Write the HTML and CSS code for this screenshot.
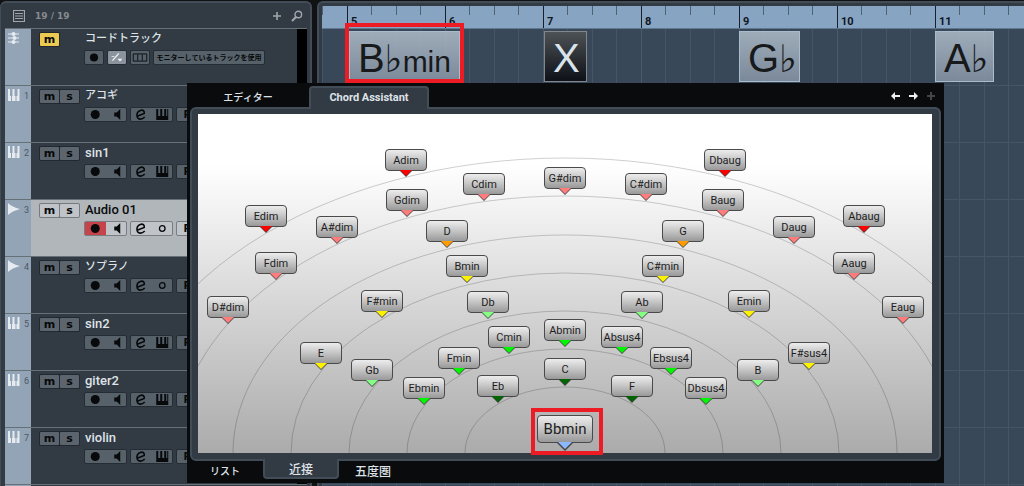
FILE: index.html
```html
<!DOCTYPE html>
<html lang="ja">
<head>
<meta charset="utf-8">
<title>Chord Assistant</title>
<link rel="stylesheet" href="styles.css">
</head>
<body>
<svg class="defs" aria-hidden="true">
  <symbol id="rec" viewBox="0 0 20 13"><circle cx="10" cy="6.5" r="4.500"/></symbol>
  <symbol id="spk" viewBox="0 0 20 13"><path d="M8 4.500h2.500l3.500-3.500v11l-3.500-3.500H8z"/></symbol>
  <symbol id="edit" viewBox="0 0 20 13"><path d="M6.500 8L13 5.500C13.500 2.500 11 1.500 9 2.500C6.500 3.500 5.500 6 5.800 8C6.200 12 10.500 12 13.500 9" fill="none" stroke="currentColor" stroke-width="1.600"/></symbol>
  <symbol id="keys" viewBox="0 0 20 13"><path d="M4 1h2v7h2V1h2v7h2V1h2v7h1V1h1v11H4z"/></symbol>
  <symbol id="ring" viewBox="0 0 20 13"><circle cx="10" cy="6.500" r="2.800" fill="none" stroke="currentColor" stroke-width="1.300"/></symbol>
  <symbol id="piano" viewBox="0 0 12 12"><path d="M0 0h2v7h1v5H0zM4 7h0.500V0h2v7h1v5H4zM9.500 0h2v12h-3V7h1z"/></symbol>
  <symbol id="wave" viewBox="0 0 12 12"><path d="M0 0q4 4 12 6q-8 2-12 6z"/></symbol>
  <symbol id="chord" viewBox="0 0 12 12"><path d="M0 2h11M0 6h11M0 10h11" stroke="currentColor" fill="none"/><circle cx="5.500" cy="2" r="2"/><circle cx="6.500" cy="6" r="2"/><circle cx="5.500" cy="10" r="2"/></symbol>
</svg>

<main class="app">
  <section class="panel tracks" aria-label="Tracks">
    <header class="tracks-head">
      <svg class="list-icon" viewBox="0 0 12 12"><path d="M.5.500h11v11H.5zM2 3.500h8M2 6h8M2 8.500h8" fill="none" stroke="currentColor" stroke-width="1.200"/></svg>
      <span class="count">19 / 19</span>
      <button class="plain" aria-label="Add track"><svg width="8" height="8" viewBox="0 0 8 8"><path d="M4 0v8M0 4h8" stroke="currentColor" stroke-width="1.600"/></svg></button>
      <button class="plain" aria-label="Search"><svg width="12" height="12" viewBox="0 0 12 12"><path d="M1 11l4-4" stroke="currentColor" stroke-width="2.200"/><circle cx="7.300" cy="4.500" r="3.300" fill="none" stroke="currentColor" stroke-width="1.400"/></svg></button>
    </header>

    <article class="track">
      <div class="strip"><svg><use href="#chord"/></svg></div>
      <div class="ms solo"><button class="muted">m</button></div>
      <div class="info"><h2 class="kana">コードトラック</h2>
        <div class="controls">
          <div class="group single"><button aria-label="Record"><svg viewBox="0 0 20 13"><use href="#rec"/></svg></button></div>
          <div class="group single lit"><button aria-label="Voicing"><svg viewBox="0 0 20 13"><path d="M5 10l7-8" stroke="currentColor" stroke-width="1.400"/><path d="M10.500 8h5.500l-2.700 3zM4 5h3v1H4z"/></svg></button></div>
          <div class="group single"><button aria-label="Lanes"><svg viewBox="0 0 20 13"><path d="M2.500 2.500h15v8h-15zM7.500 3v7M12.500 3v7" fill="none" stroke="currentColor"/></svg></button></div>
          <div class="group"><button class="monitor">モニターしているトラックを使用</button></div>
        </div></div>
      <div class="meter"></div>
    </article>

    <article class="track">
      <div class="strip"><svg><use href="#piano"/></svg><span>1</span></div>
      <div class="ms"><button>m</button><button>s</button></div>
      <div class="info"><h2 class="kana">アコギ</h2>
        <div class="controls"><div class="group pair"><button aria-label="Record"><svg><use href="#rec"/></svg></button><button aria-label="Monitor"><svg><use href="#spk"/></svg></button></div><div class="group pair"><button aria-label="Edit"><svg><use href="#edit"/></svg></button><button aria-label="Instrument"><svg><use href="#keys"/></svg></button></div><div class="group pair"><button>R</button><button>W</button></div></div></div>
      <div class="meter"></div>
    </article>

    <article class="track">
      <div class="strip"><svg><use href="#piano"/></svg><span>2</span></div>
      <div class="ms"><button>m</button><button>s</button></div>
      <div class="info"><h2>sin1</h2>
        <div class="controls"><div class="group pair"><button aria-label="Record"><svg><use href="#rec"/></svg></button><button aria-label="Monitor"><svg><use href="#spk"/></svg></button></div><div class="group pair"><button aria-label="Edit"><svg><use href="#edit"/></svg></button><button aria-label="Instrument"><svg><use href="#keys"/></svg></button></div><div class="group pair"><button>R</button><button>W</button></div></div></div>
      <div class="meter"></div>
    </article>

    <article class="track selected">
      <div class="strip"><svg><use href="#wave"/></svg><span>3</span></div>
      <div class="ms"><button>m</button><button>s</button></div>
      <div class="info"><h2>Audio 01</h2>
        <div class="controls"><div class="group pair"><button class="armed" aria-label="Record"><svg><use href="#rec"/></svg></button><button aria-label="Monitor"><svg><use href="#spk"/></svg></button></div><div class="group pair"><button aria-label="Edit"><svg><use href="#edit"/></svg></button><button aria-label="Channels"><svg><use href="#ring"/></svg></button></div><div class="group pair"><button>R</button><button>W</button></div></div></div>
      <div class="meter"></div>
    </article>

    <article class="track">
      <div class="strip"><svg><use href="#wave"/></svg><span>4</span></div>
      <div class="ms"><button>m</button><button>s</button></div>
      <div class="info"><h2 class="kana">ソプラノ</h2>
        <div class="controls"><div class="group pair"><button aria-label="Record"><svg><use href="#rec"/></svg></button><button aria-label="Monitor"><svg><use href="#spk"/></svg></button></div><div class="group pair"><button aria-label="Edit"><svg><use href="#edit"/></svg></button><button aria-label="Channels"><svg><use href="#ring"/></svg></button></div><div class="group pair"><button>R</button><button>W</button></div></div></div>
      <div class="meter"></div>
    </article>

    <article class="track">
      <div class="strip"><svg><use href="#piano"/></svg><span>5</span></div>
      <div class="ms"><button>m</button><button>s</button></div>
      <div class="info"><h2>sin2</h2>
        <div class="controls"><div class="group pair"><button aria-label="Record"><svg><use href="#rec"/></svg></button><button aria-label="Monitor"><svg><use href="#spk"/></svg></button></div><div class="group pair"><button aria-label="Edit"><svg><use href="#edit"/></svg></button><button aria-label="Instrument"><svg><use href="#keys"/></svg></button></div><div class="group pair"><button>R</button><button>W</button></div></div></div>
      <div class="meter"></div>
    </article>

    <article class="track">
      <div class="strip"><svg><use href="#piano"/></svg><span>6</span></div>
      <div class="ms"><button>m</button><button>s</button></div>
      <div class="info"><h2>giter2</h2>
        <div class="controls"><div class="group pair"><button aria-label="Record"><svg><use href="#rec"/></svg></button><button aria-label="Monitor"><svg><use href="#spk"/></svg></button></div><div class="group pair"><button aria-label="Edit"><svg><use href="#edit"/></svg></button><button aria-label="Instrument"><svg><use href="#keys"/></svg></button></div><div class="group pair"><button>R</button><button>W</button></div></div></div>
      <div class="meter"></div>
    </article>

    <article class="track">
      <div class="strip"><svg><use href="#piano"/></svg><span>7</span></div>
      <div class="ms"><button>m</button><button>s</button></div>
      <div class="info"><h2>violin</h2>
        <div class="controls"><div class="group pair"><button aria-label="Record"><svg><use href="#rec"/></svg></button><button aria-label="Monitor"><svg><use href="#spk"/></svg></button></div><div class="group pair"><button aria-label="Edit"><svg><use href="#edit"/></svg></button><button aria-label="Instrument"><svg><use href="#keys"/></svg></button></div><div class="group pair"><button>R</button><button>W</button></div></div></div>
      <div class="meter"></div>
    </article>
    <div class="track"><div class="strip"></div></div>
  </section>

  <section class="panel timeline" aria-label="Timeline">
    <div class="ruler">
      <span class="bar">5</span><span class="bar">6</span><span class="bar">7</span><span class="bar">8</span><span class="bar">9</span><span class="bar">10</span><span class="bar">11</span>
    </div>
    <div class="lane">
      <div class="event" style="left:27px;width:111px"><b>B</b><i>♭</i><em>min</em></div>
      <div class="event none" style="left:222px;width:43px"><b>X</b></div>
      <div class="event" style="left:417px;width:61px"><b>G</b><i>♭</i></div>
      <div class="event" style="left:613px;width:59px"><b>A</b><i>♭</i></div>
      <div class="mark mark-event"></div>
    </div>
    <div class="grid"></div>
  </section>
</main>

<section class="editor" aria-label="Chord editor">
  <nav class="tabs top">
    <button class="tab kana">エディター</button>
    <button class="tab active">Chord Assistant</button>
    <div class="nav">
      <button class="plain" aria-label="Back"><svg width="9" height="8" viewBox="0 0 9 8"><path d="M0 4l4-4v3h5v2H4v3z"/></svg></button>
      <button class="plain" aria-label="Forward"><svg width="9" height="8" viewBox="0 0 9 8"><path d="M9 4L5 0v3H0v2h5v3z"/></svg></button>
      <button class="plain off" aria-label="Add"><svg width="8" height="8" viewBox="0 0 8 8"><path d="M3 0h2v3h3v2H5v3H3V5H0V3h3z"/></svg></button>
    </div>
  </nav>
  <div class="frame">
    <div class="canvas">
      <svg class="rings" aria-hidden="true">
        <ellipse cx="50%" cy="100%" rx="100" ry="66"/>
        <ellipse cx="50%" cy="100%" rx="158" ry="104"/>
        <ellipse cx="50%" cy="100%" rx="216" ry="142"/>
        <ellipse cx="50%" cy="100%" rx="274" ry="180"/>
        <ellipse cx="50%" cy="100%" rx="332" ry="218"/>
        <ellipse cx="50%" cy="100%" rx="390" ry="257"/>
        <ellipse cx="50%" cy="100%" rx="448" ry="295"/>
      </svg>
      <button class="node red" style="--x:-159px;--y:46px">Adim</button>
      <button class="node red" style="--x:160px;--y:46px">Dbaug</button>
      <button class="node red" style="--x:-299px;--y:102px">Edim</button>
      <button class="node red" style="--x:299px;--y:102px">Abaug</button>
      <button class="node pink" style="--x:-81px;--y:70px">Cdim</button>
      <button class="node pink" style="--x:0px;--y:64px">G#dim</button>
      <button class="node pink" style="--x:81px;--y:70px">C#dim</button>
      <button class="node pink" style="--x:-158px;--y:86px">Gdim</button>
      <button class="node pink" style="--x:158px;--y:86px">Baug</button>
      <button class="node pink" style="--x:-228px;--y:113px">A#dim</button>
      <button class="node pink" style="--x:229px;--y:113px">Daug</button>
      <button class="node pink" style="--x:-289px;--y:149px">Fdim</button>
      <button class="node pink" style="--x:289px;--y:149px">Aaug</button>
      <button class="node pink" style="--x:-337px;--y:193px">D#dim</button>
      <button class="node pink" style="--x:338px;--y:193px">Eaug</button>
      <button class="node orange" style="--x:-118px;--y:117px">D</button>
      <button class="node orange" style="--x:118px;--y:117px">G</button>
      <button class="node yellow" style="--x:-98px;--y:152px">Bmin</button>
      <button class="node yellow" style="--x:98px;--y:152px">C#min</button>
      <button class="node yellow" style="--x:-183px;--y:187px">F#min</button>
      <button class="node yellow" style="--x:184px;--y:187px">Emin</button>
      <button class="node yellow" style="--x:-244px;--y:239px">E</button>
      <button class="node yellow" style="--x:244px;--y:239px">F#sus4</button>
      <button class="node mint" style="--x:-77px;--y:188px">Db</button>
      <button class="node mint" style="--x:77px;--y:188px">Ab</button>
      <button class="node mint" style="--x:-193px;--y:256px">Gb</button>
      <button class="node mint" style="--x:193px;--y:256px">B</button>
      <button class="node lime" style="--x:-56px;--y:223px">Cmin</button>
      <button class="node lime" style="--x:0px;--y:216px">Abmin</button>
      <button class="node lime" style="--x:57px;--y:223px">Absus4</button>
      <button class="node lime" style="--x:-106px;--y:244px">Fmin</button>
      <button class="node lime" style="--x:106px;--y:244px">Ebsus4</button>
      <button class="node lime" style="--x:-141px;--y:274px">Ebmin</button>
      <button class="node lime" style="--x:141px;--y:274px">Dbsus4</button>
      <button class="node green" style="--x:-67px;--y:272px">Eb</button>
      <button class="node green" style="--x:0px;--y:255px">C</button>
      <button class="node green" style="--x:67px;--y:272px">F</button>
      <button class="node origin" style="--x:0px;--y:315px">Bbmin</button>
      <div class="mark mark-origin"></div>
    </div>
  </div>
  <nav class="tabs bottom">
    <button class="tab kana">リスト</button>
    <button class="tab active">近接</button>
    <button class="tab">五度圏</button>
  </nav>
</section>
</body>
</html>
```
FILE: styles.css
```css
* { box-sizing: border-box; }

body {
  margin: 0;
  height: 100vh;
  overflow: hidden;
  position: relative;
  background: #101214;
  font-family: Roboto, "Liberation Sans", "Noto Sans CJK JP", sans-serif;
  color: #dfe3e8;
}

button {
  margin: 0;
  padding: 0;
  border: 0;
  background: none;
  color: inherit;
  font: inherit;
}

svg { fill: currentColor; display: block; }
.defs { position: absolute; width: 0; height: 0; }
.plain { display: flex; }

.app {
  display: grid;
  grid-template-columns: 312px 1fr;
  gap: 5px;
  height: 100%;
  padding-top: 1px;
}

.panel {
  min-width: 0;
  overflow: hidden;
  background: #323a43;
  border: 2px solid #434d58;
  border-bottom: 0;
}

/* Track list */
.tracks {
  padding: 0 3px 0 4px;
  border-left-width: 1px;
  border-radius: 6px 6px 0 0;
}

.tracks-head {
  display: flex;
  align-items: center;
  gap: 10px;
  height: 25px;
  padding: 0 4px 0 8px;
  color: #a2a6aa;
}
.list-icon { width: 12px; height: 12px; }
.count { flex: 1; font-size: 9px; font-weight: 700; font-family: "DejaVu Sans", sans-serif; color: #858b91; }

.track {
  display: flex;
  height: 57px;
  border-top: 1px solid #667077;
}
.strip {
  display: flex;
  justify-content: space-between;
  width: 26px;
  padding: 3px 2px 0 3px;
  background: #93a4b7;
  color: #e6ebf0;
}
.strip svg { flex: none; width: 12px; height: 12px; }
.strip span { font-size: 9px; line-height: 14px; color: #4c5864; }

.ms {
  display: flex;
  gap: 1px;
  width: 41px;
  height: 15px;
  margin: 3px 0 0 8px;
  padding: 1px;
  border-radius: 2px;
  background: #22282f;
  color: #07090b;
  font: 700 11px/12px "DejaVu Sans", sans-serif;
}
.ms button { flex: 1; background: #5c656d; border-radius: 1px; }
.ms.solo { width: 21px; margin-right: 20px; }
.ms .muted { background: #edcb50; }

.info { flex: 1; min-width: 0; margin-left: 4px; overflow: hidden; }
.info h2 {
  margin: 2px 0 4px;
  padding-left: 1px;
  font-size: 13px;
  line-height: 15px;
  font-weight: 500;
}
.info h2.kana { font-size: 11px; }

.controls { display: flex; gap: 3px; color: #07090b; }
.group {
  display: flex;
  flex: none;
  height: 15px;
  border: 1px solid #252c33;
  border-radius: 2px;
  background: #56616a;
  font: 700 10px/13px "DejaVu Sans", sans-serif;
}
.group.single { width: 20px; }
.group.pair { width: 43px; }
.group button { flex: 1; min-width: 0; }
.group svg { width: 100%; height: 13px; }
.lit { background: #8b949c; color: #f2f4f6; }
.group .monitor {
  flex: none;
  width: 110px;
  overflow: hidden;
  white-space: nowrap;
  font: 700 7px/13px "Noto Sans CJK JP", sans-serif;
}
.meter { width: 10px; margin-left: 4px; background: #000; }

.selected { background: #b1b6ba; color: #090b0d; }
.selected .ms { background: #757b80; }
.selected .ms button { background: #c0c4c8; }
.selected .group { background: #c0c4c9; border-color: #777d82; }
.group .armed { background: #c7434b; }

/* Timeline */
.timeline {
  display: flex;
  flex-direction: column;
  border-right: 0;
  border-radius: 6px 0 0 0;
  padding: 3px 0 0 3px;
}

.ruler {
  display: flex;
  flex: none;
  height: 22px;
  padding-left: 25px;
  overflow: hidden;
  color: #10161d;
  background:
    linear-gradient(90deg, transparent 24px, #4e6277 24px 25px, transparent 25px 49px, #4e6277 49px 50px, transparent 50px 73px, #4e6277 73px 74px, transparent 74px) -73px 0 / 98px 9px repeat-x,
    #87a4c2;
}
.bar {
  flex: none;
  width: 98px;
  padding: 10px 0 0 3px;
  border-left: 1px solid #17202a;
  font-size: 11px;
  line-height: 12px;
  font-weight: 700;
}

.lane, .grid {
  background:
    linear-gradient(90deg, #4b5b6c 1px, transparent 1px 24px, #455567 24px 25px, transparent 25px 49px, #455567 49px 50px, transparent 50px 73px, #455567 73px 74px, transparent 74px) -73px 0 / 98px 100% repeat-x,
    #384859;
}
.lane { position: relative; flex: none; height: 57px; border-top: 1px solid #5f788f; }
.grid {
  flex: 1;
  background:
    linear-gradient(#455567 1px, transparent 1px) 0 0 / 100% 57px,
    linear-gradient(90deg, #4b5b6c 1px, transparent 1px 24px, #455567 24px 25px, transparent 25px 49px, #455567 49px 50px, transparent 50px 73px, #455567 73px 74px, transparent 74px) -73px 0 / 98px 100%,
    #384859;
}

.event {
  position: absolute;
  top: 2px;
  display: flex;
  align-items: baseline;
  height: 51px;
  padding-left: 8px;
  border: 1px solid #a9bccb;
  background: linear-gradient(#a9b7c4e6, #8290a1e6);
  color: #17191b;
  font: 400 40px/52px "Liberation Sans", sans-serif;
}
.event b { font-weight: 400; }
.event i { font: normal 38px/32px "DejaVu Sans", sans-serif; }
.event em { font-style: normal; font-size: 30px; line-height: 32px; }
.event.none {
  border-color: #81878c;
  background: linear-gradient(#4d5255, #0d1118);
  color: #d9e3ec;
}

.mark { position: absolute; border: 4px solid #ed1c24; pointer-events: none; }
.mark-event { left: 23px; top: -6px; width: 119px; height: 60px; }

/* Chord editor window */
.editor {
  position: absolute;
  left: 187px;
  right: 80px;
  top: 83px;
  bottom: 3px;
  display: flex;
  flex-direction: column;
  background: #0a0b0d;
}
.tabs { display: flex; font-size: 12px; font-weight: 500; }
.tab { flex: none; }
.tabs .kana { font-size: 10px; }
.tab.active { position: relative; background: #323a43; border: 2px solid #434d58; }

.top { height: 24px; padding-top: 3px; }
.top .tab { width: 122px; }
.top .active { width: 120px; margin-bottom: -2px; padding-bottom: 3px; border-bottom: 0; border-radius: 4px 4px 0 0; font-size: 11px; font-weight: 700; }
.nav {
  display: flex;
  align-items: center;
  gap: 9px;
  margin-left: auto;
  padding: 0 9px 2px 0;
  color: #eef0f2;
}
.nav .off { color: #42464a; }

.frame {
  flex: 1;
  display: flex;
  margin: 0 3px;
  padding: 5px 7px 6px 6px;
  border: 2px solid #434d58;
  border-radius: 6px;
  background: #323a43;
}
.canvas {
  position: relative;
  flex: 1;
  background: linear-gradient(#fff 0, #fff 15%, #ababab 100%);
}
.rings { width: 100%; height: 100%; fill: none; stroke: #00000030; overflow: hidden; position: absolute; }

.bottom { height: 22px; padding-bottom: 4px; }
.bottom .tab { width: 76px; }
.bottom .active { margin-top: -2px; border-top: 0; border-radius: 0 0 4px 4px; }
.bottom .tab:last-child { width: 68px; }

.node {
  --tip: #f00;
  position: absolute;
  left: calc(50% + var(--x));
  top: var(--y);
  width: 42px;
  height: 22px;
  margin: -11px 0 0 -21px;
  border: 1px solid #4a4a4a;
  border-radius: 4px;
  background: linear-gradient(#ededed, #c9c9c9 45%, #999);
  color: #1d1d1d;
  font: 400 11px/19px Roboto, "Liberation Sans", sans-serif;
}
.node::before, .node::after {
  content: "";
  position: absolute;
  left: 50%;
  top: 100%;
  width: 14px;
  height: 7px;
  margin-left: -7px;
  background: #444;
  clip-path: polygon(0 0, 100% 0, 50% 100%);
}
.node::after { width: 12px; height: 6px; margin-left: -6px; background: var(--tip); }
.red { --tip: #f00; }
.pink { --tip: #ff7c7c; }
.orange { --tip: #ff9d00; }
.yellow { --tip: #fff200; }
.mint { --tip: #84ff84; }
.lime { --tip: #00f700; }
.green { --tip: #006400; }
.origin {
  --tip: #8cb8ff;
  width: 56px;
  height: 28px;
  margin: -14px 0 0 -28px;
  font-size: 15px;
  line-height: 25px;
}
.origin::before { width: 18px; height: 9px; margin-left: -9px; }
.origin::after { width: 14px; height: 7px; margin-left: -7px; }
.mark-origin { left: calc(50% - 34px); bottom: -2px; width: 72px; height: 47px; }
```
